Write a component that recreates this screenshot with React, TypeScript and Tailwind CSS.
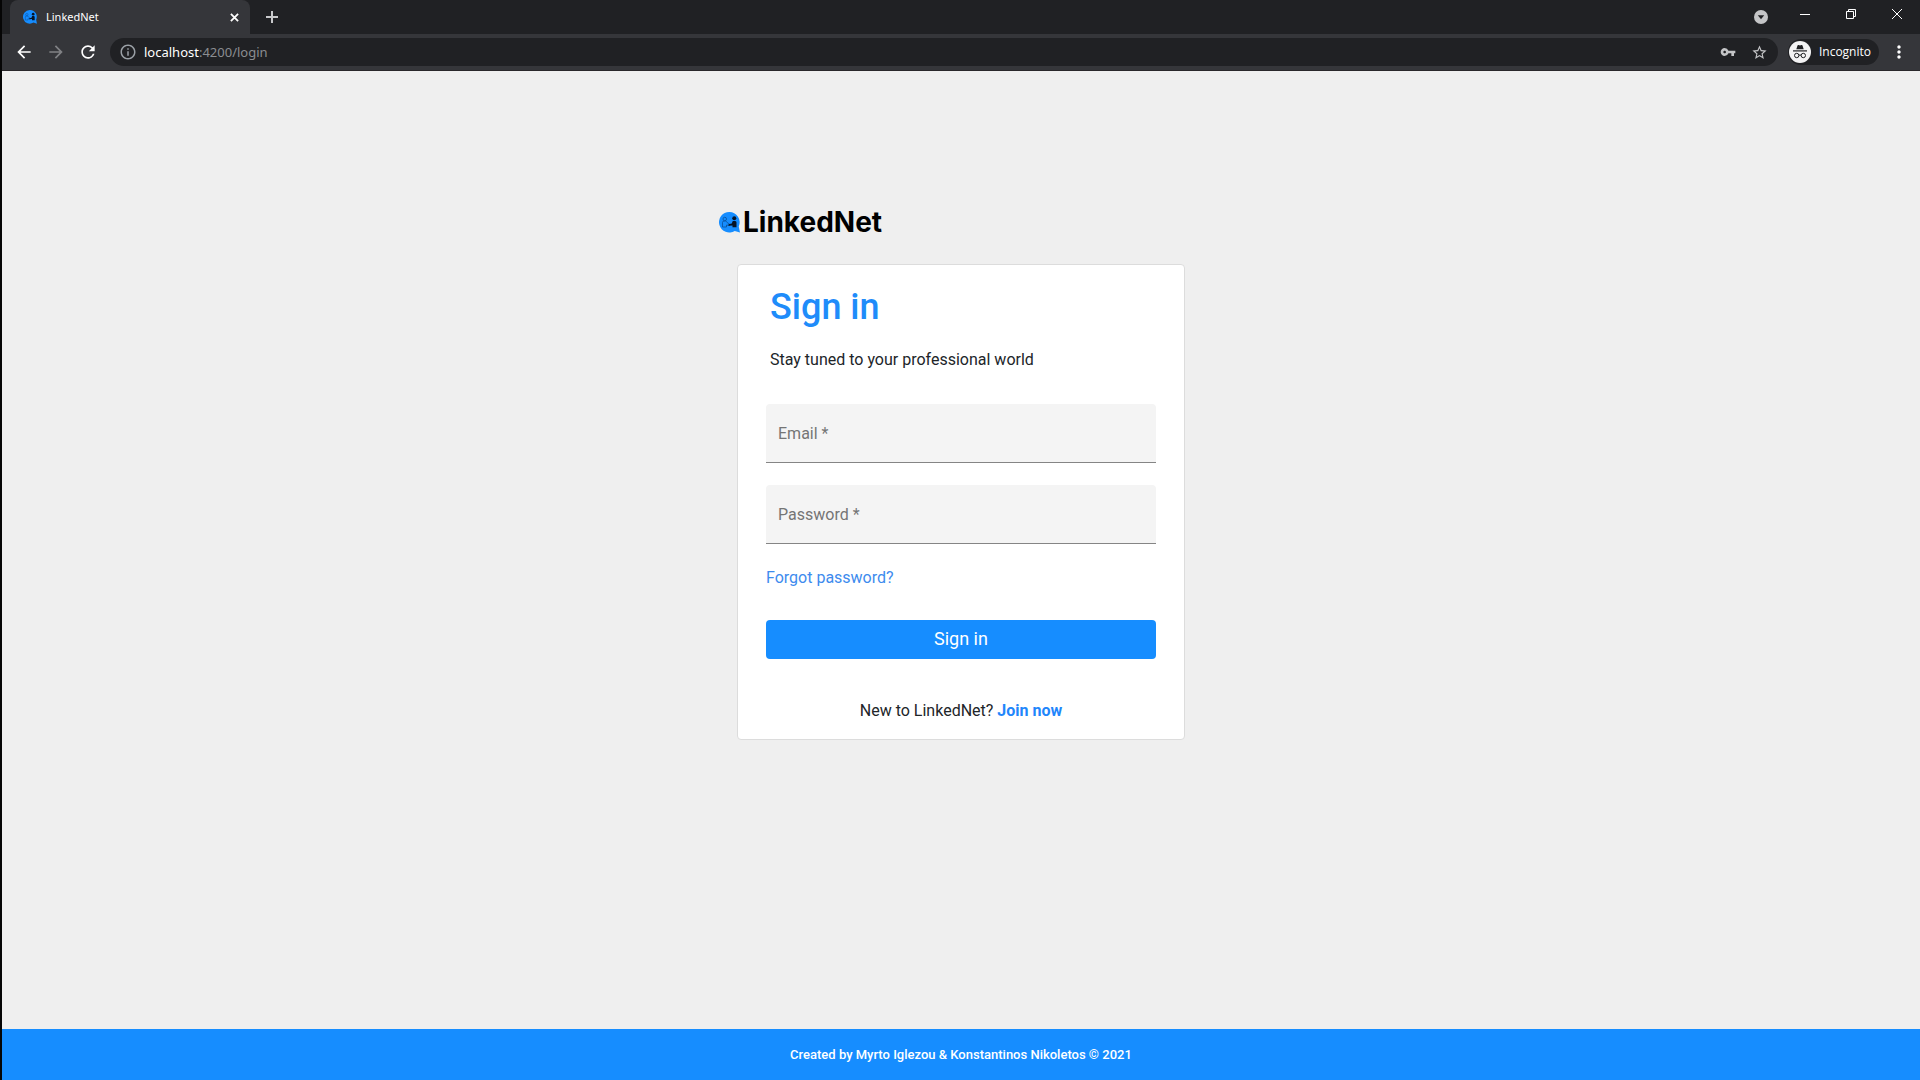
import { useState } from "react";
import {
  MdArrowBack,
  MdArrowForward,
  MdInfoOutline,
  MdMoreVert,
  MdRefresh,
  MdStarBorder,
  MdVpnKey,
} from "react-icons/md";

function BrandMark({ className }: { className: string }) {
  return (
    <svg viewBox="0 0 42 42" className={className} aria-hidden="true">
      <path d="M20.500 0a20.500 20.500 0 1 0 11 37.800L42 41l-2.500-12A20.500 20.500 0 0 0 20.500 0Z" fill="#168dff" />
      <g fill="none" stroke="#0a4d94" strokeWidth="1.500">
        <circle cx="11.500" cy="14" r="3.500" />
        <path d="M7 30V21q0-3 3-3h3q2 0 3 3l5 3v3l-6-1v4Z" />
      </g>
      <circle cx="30.500" cy="12.500" r="4" fill="#061426" />
      <path d="M27.500 18h5q2.500 0 2.500 3v9.500h-8V27l-8 .5v-3l6.500-1.500Z" fill="#061426" />
    </svg>
  );
}

function TabStrip() {
  return (
    <div className="flex h-[34px] items-end bg-[#202124] pl-2">
      <div className="flex h-[34px] w-60 items-center rounded-t-lg bg-[#35363a] pl-[13px] pr-2">
        <BrandMark className="size-[14px]" />
        <span className="ml-[9px] flex-1 font-['Noto_Sans',sans-serif] text-[11px] text-white">LinkedNet</span>
        <button aria-label="Close tab" className="flex size-4 items-center justify-center">
          <svg viewBox="0 0 10 10" className="size-[9px]" stroke="#fff" strokeWidth="2">
            <path d="M1 1l8 8M9 1l-8 8" />
          </svg>
        </button>
      </div>
      <button aria-label="New tab" className="ml-2 flex size-7 items-center justify-center self-center">
        <svg viewBox="0 0 12 12" className="size-3" stroke="#c8c9cb" strokeWidth="2">
          <path d="M6 0v12M0 6h12" />
        </svg>
      </button>
      <div className="ml-auto flex self-start">
        <button aria-label="Search tabs" className="mr-[14px] mt-[10px] size-[14px]">
          <svg viewBox="0 0 14 14" className="size-[14px]">
            <circle cx="7" cy="7" r="7" fill="#c4c5c7" />
            <path d="M3.800 5.200h6.400L7 9.200Z" fill="#202124" />
          </svg>
        </button>
        <button aria-label="Minimize" className="flex h-7 w-[46px] items-center justify-center">
          <svg viewBox="0 0 10 10" className="size-[10px]" stroke="#fff">
            <path d="M0 5.500h10" />
          </svg>
        </button>
        <button aria-label="Restore" className="flex h-7 w-[46px] items-center justify-center">
          <svg viewBox="0 0 10 10" className="size-[10px]" fill="none" stroke="#fff">
            <path d="M.5 2.500h7v7h-7ZM2.500 2.500v-2h7v7h-2" />
          </svg>
        </button>
        <button aria-label="Close" className="flex h-7 w-[46px] items-center justify-center">
          <svg viewBox="0 0 10 10" className="size-[10px]" stroke="#fff">
            <path d="M0 0l10 10M10 0L0 10" />
          </svg>
        </button>
      </div>
    </div>
  );
}

function Toolbar() {
  return (
    <div className="flex h-[37px] items-center border-b border-[#29272b] bg-[#35363a] pl-1.5 pr-[11px] text-white">
      <button aria-label="Back" className="flex size-8 items-center justify-center">
        <MdArrowBack className="size-5" />
      </button>
      <button aria-label="Forward" className="flex size-8 items-center justify-center text-[#818285]">
        <MdArrowForward className="size-5" />
      </button>
      <button aria-label="Reload" className="flex size-8 items-center justify-center">
        <MdRefresh className="size-5" />
      </button>
      <div className="ml-1.5 flex h-7 flex-1 items-center rounded-full bg-[#202124] pl-[9px] pr-0.5">
        <MdInfoOutline className="size-[18px] text-[#9aa0a6]" />
        <p className="ml-[7px] flex-1 font-['Noto_Sans',sans-serif] text-[13px] leading-5">
          localhost<span className="text-[#8b8d91]">:4200/login</span>
        </p>
        <button aria-label="Saved passwords" className="flex size-8 items-center justify-center text-[#c4c5c7]">
          <MdVpnKey className="size-4" />
        </button>
        <button aria-label="Bookmark this page" className="flex size-8 items-center justify-center text-[#c4c5c7]">
          <MdStarBorder className="size-[17px]" />
        </button>
      </div>
      <button className="ml-2.5 flex h-[26px] items-center gap-2 rounded-full bg-[#202124] pl-px pr-2 font-['Open_Sans',sans-serif] text-xs">
        <svg viewBox="0 0 22 22" className="size-[22px]" aria-hidden="true">
          <circle cx="11" cy="11" r="11" fill="#f3f3f4" />
          <path d="M7.300 8.300 8.500 4.500q.3-.8 1.200-.5l1.300.4 1.300-.4q.9-.3 1.200.5l1.200 3.800Z" fill="#202124" />
          <path d="M4 9.900h14" stroke="#202124" strokeWidth="1.200" />
          <g fill="none" stroke="#202124">
            <circle cx="7.700" cy="14.500" r="2.200" />
            <circle cx="14.300" cy="14.500" r="2.200" />
            <path d="M9.900 14.300q1.100-.8 2.200 0" />
          </g>
        </svg>
        Incognito
      </button>
      <button aria-label="Menu" className="ml-2.5 flex size-5 items-center justify-center">
        <MdMoreVert className="size-5" />
      </button>
    </div>
  );
}

function Field({ id, label, type }: { id: string; label: string; type: string }) {
  const [value, setValue] = useState("");
  return (
    <div className="grid h-[59px] rounded-t border-b border-[#858585] bg-[#f4f4f4] pt-0.5">
      <input
        id={id}
        type={type}
        required
        value={value}
        onChange={(e) => setValue(e.target.value)}
        className="w-full bg-transparent px-3 outline-none [grid-area:1/1]"
      />
      {value === "" && (
        <label htmlFor={id} className="pointer-events-none self-center px-3 text-[#757575] [grid-area:1/1]">
          {label} *
        </label>
      )}
    </div>
  );
}

function SignInCard() {
  return (
    <form
      onSubmit={(e) => e.preventDefault()}
      className="mx-auto w-[448px] max-w-full rounded border border-[#dcdcdc] bg-white px-7 pb-4 pt-[18px]"
    >
      <h1 className="px-1 text-4xl font-medium leading-[48px] text-[#1f8cfa]">Sign in</h1>
      <p className="mt-[17px] px-1">Stay tuned to your professional world</p>
      <div className="mt-8 flex flex-col gap-[22px]">
        <Field id="email" label="Email" type="email" />
        <Field id="password" label="Password" type="password" />
      </div>
      <a href="#forgot" className="mt-[22px] block text-[#3d8bee]">
        Forgot password?
      </a>
      <button type="submit" className="mt-[30px] h-[39px] w-full rounded bg-[#168dff] pb-0.5 text-lg text-white">
        Sign in
      </button>
      <p className="mt-10 text-center">
        New to LinkedNet?{" "}
        <a href="#join" className="font-bold text-[#1f86fb]">
          Join now
        </a>
      </p>
    </form>
  );
}

export default function App() {
  return (
    <div className="flex min-h-screen flex-col border-l-2 border-[#050505] bg-[#efefef] font-[Roboto,sans-serif] text-base text-[#212529]">
      <header>
        <TabStrip />
        <Toolbar />
      </header>
      <main className="flex-1 px-4 pt-[133px]">
        <div className="mx-auto w-[484px] max-w-full">
          <div className="mb-6 flex h-9 items-center gap-[3px] text-black">
            <BrandMark className="size-[21px]" />
            <span className="font-[Inter,sans-serif] text-[28px] font-bold leading-9">LinkedNet</span>
          </div>
          <SignInCard />
        </div>
      </main>
      <footer className="flex h-[51px] items-center justify-center bg-[#168dff] text-[13px] font-medium text-white">
        Created by Myrto Iglezou &amp; Konstantinos Nikoletos © 2021
      </footer>
    </div>
  );
}
